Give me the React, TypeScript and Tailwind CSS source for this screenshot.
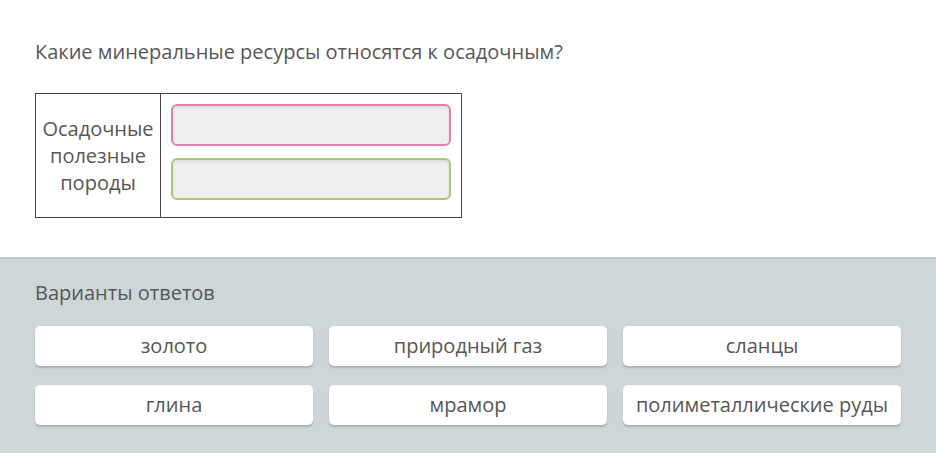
import React from 'react';

const options = ['золото', 'природный газ', 'сланцы', 'глина', 'мрамор', 'полиметаллические руды'];

const App: React.FC = () => {
  return (
    <div className="w-[937px] h-[453px] bg-white text-[#575757] font-['Open_Sans',sans-serif] overflow-hidden">
      {/* Question */}
      <div className="px-[35px] pt-[38px]">
        <p className="text-[20px] leading-[28px]">Какие минеральные ресурсы относятся к осадочным?</p>

        <table className="mt-[27px] border-collapse">
          <tbody>
            <tr>
              <td className="w-[125px] h-[124px] border-[1.5px] border-[#444] text-center text-[20px] leading-[27px] px-1">
                Осадочные полезные породы
              </td>
              <td className="w-[301px] border-[1.5px] border-[#444] px-[10px] pt-[10px] pb-[16px] align-top">
                <div className="flex flex-col gap-[12px]">
                  <div className="h-[42px] w-[280px] rounded-[6px] border-2 border-[#e17fae] bg-[#eeeeee] shadow-[inset_0_2px_3px_rgba(0,0,0,0.08)]"></div>
                  <div className="h-[42px] w-[280px] rounded-[6px] border-2 border-[#a9c677] bg-[#eeeeee] shadow-[inset_0_2px_3px_rgba(0,0,0,0.08)]"></div>
                </div>
              </td>
            </tr>
          </tbody>
        </table>
      </div>

      {/* Answer options */}
      <div className="mt-[39px] w-[936px] h-[196px] bg-[#cdd7d9] border-t-2 border-[#bccac7] px-[35px] pt-[20px]">
        <p className="text-[20px] leading-[28px]">Варианты ответов</p>
        <div className="mt-[19px] grid grid-cols-[278px_278px_278px] gap-x-[16px] gap-y-[19px]">
          {options.map((o) => (
            <div
              key={o}
              className="h-[40px] rounded-[5px] bg-white flex items-center justify-center text-[20px] shadow-[0_2px_2px_rgba(0,0,0,0.18)]"
            >
              {o}
            </div>
          ))}
        </div>
      </div>
    </div>
  );
};

export default App;
